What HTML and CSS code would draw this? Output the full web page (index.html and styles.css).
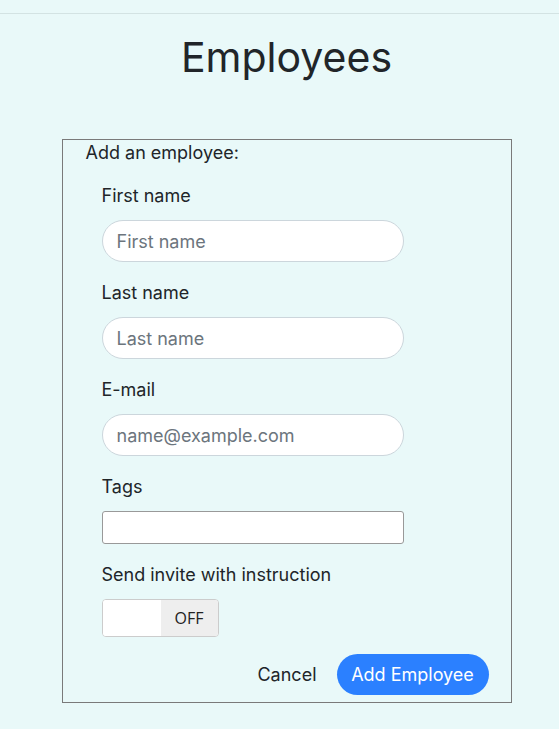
FILE: index.html
```html
<!DOCTYPE html>
<html lang="en">
<head>
<meta charset="utf-8">
<title>Employees</title>
<link rel="stylesheet" href="styles.css">
</head>
<body>
<div class="topbar"></div>
<main class="main">
  <h1 class="title">Employees</h1>
  <form class="card">
    <div class="legend">Add an employee:</div>
    <div class="field">
      <label class="label" for="fn">First name</label>
      <input class="pill" id="fn" type="text" placeholder="First name">
    </div>
    <div class="field">
      <label class="label" for="ln">Last name</label>
      <input class="pill" id="ln" type="text" placeholder="Last name">
    </div>
    <div class="field">
      <label class="label" for="em">E-mail</label>
      <input class="pill" id="em" type="email" placeholder="name@example.com">
    </div>
    <div class="field">
      <label class="label" for="tg">Tags</label>
      <input class="tags" id="tg" type="text">
    </div>
    <div class="field">
      <span class="label">Send invite with instruction</span>
      <div class="toggle">
        <span class="toggle-knob"></span>
        <span class="toggle-off">OFF</span>
      </div>
    </div>
    <div class="actions">
      <button type="button" class="btn-link">Cancel</button>
      <button type="button" class="btn-primary">Add Employee</button>
    </div>
  </form>
</main>
</body>
</html>
```

FILE: styles.css
```css
* { box-sizing: border-box; }
html, body { margin: 0; padding: 0; }
body {
  background: #e9f9f9;
  font-family: Inter, "Noto Sans", sans-serif;
  color: #212529;
  width: 559px;
  height: 729px;
  overflow: hidden;
}
.topbar {
  height: 14px;
  border-bottom: 1px solid #d3e3e3;
}
.main {
  margin-left: 15px;
  width: 543px;
  display: flex;
  flex-direction: column;
  align-items: center;
}
.title {
  margin: 18px 0 0;
  font-size: 41px;
  font-weight: 400;
  line-height: 50px;
  color: #212529;
}
.card {
  margin-top: 57px;
  width: 450px;
  height: 564px;
  border: 1px solid #7a7a7a;
  padding: 0 22px 0 39px;
  display: flex;
  flex-direction: column;
}
.legend {
  margin: 0 0 0 -16px;
  font-size: 18px;
  line-height: 24px;
  padding-top: 1px;
}
.field {
  display: flex;
  flex-direction: column;
  margin-top: 19px;
}
.label {
  font-size: 18px;
  line-height: 24px;
  margin-bottom: 12px;
}
.pill {
  width: 302px;
  height: 42px;
  border: 1px solid #ccd6dc;
  border-radius: 21px;
  background: #fff;
  padding: 0 14px;
  font-family: inherit;
  font-size: 18px;
  color: #212529;
  outline: none;
}
.pill::placeholder { color: #6c757d; }
.tags {
  width: 302px;
  height: 33px;
  border: 1px solid #999;
  border-radius: 3px;
  background: #fff;
  outline: none;
}
.toggle {
  display: flex;
  width: 117px;
  height: 38px;
  border: 1px solid #ccc;
  border-radius: 4px;
  overflow: hidden;
  background: #fff;
}
.toggle-knob { width: 58px; background: #fff; }
.toggle-off {
  flex: 1;
  background: #eee;
  display: flex;
  align-items: center;
  justify-content: center;
  font-family: "Open Sans", sans-serif;
  font-size: 16px;
  color: #222;
}
.actions {
  display: flex;
  justify-content: flex-end;
  align-items: center;
  gap: 20px;
  margin-top: 17px;
}
.btn-link {
  background: none;
  border: 0;
  padding: 0;
  font-family: inherit;
  font-size: 18px;
  color: #212529;
}
.btn-primary {
  height: 41px;
  width: 152px;
  border: 0;
  border-radius: 21px;
  background: #2b80ff;
  color: #fff;
  font-family: inherit;
  font-size: 18px;
}
```
